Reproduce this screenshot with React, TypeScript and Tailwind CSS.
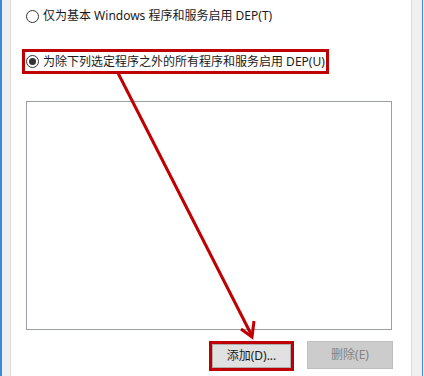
import React from "react";

const RED = "#c00000";

function Radio({ checked }: { checked?: boolean }) {
    return (
        <span className="w-[13px] h-[13px] rounded-full border border-[#333333] bg-white flex items-center justify-center shrink-0">
            {checked && <span className="w-[7px] h-[7px] rounded-full bg-[#333333]" />}
        </span>
    );
}

export default function App() {
    return (
        <div
            className="relative w-[424px] h-[376px] flex overflow-hidden bg-white text-[12px] text-[#1a1a1a]"
            style={{ fontFamily: '"Noto Sans", "Noto Sans CJK SC", sans-serif' }}
        >
            {/* left window frame */}
            <div className="w-[2px] bg-[#3b8ad9]" />
            <div className="w-[8px] bg-[#f0f0f0]" />

            {/* dialog panel */}
            <div className="w-[402px] flex flex-col bg-white border-x border-[#dadada]">
                <label className="mt-[9px] ml-[15px] h-[14px] flex items-center gap-[4px] leading-none">
                    <Radio />
                    <span>仅为基本 Windows 程序和服务启用 DEP(T)</span>
                </label>

                <div
                    className="mt-[26px] ml-[11px] w-[307px] h-[25px] border-[3px] flex items-center gap-[4px] pl-[1px] leading-none"
                    style={{ borderColor: RED }}
                >
                    <Radio checked />
                    <span>为除下列选定程序之外的所有程序和服务启用 DEP(U)</span>
                </div>

                <div className="mt-[27px] ml-[15px] w-[366px] h-[229px] border border-[#9a9ea6] bg-white" />

                <div className="mt-[11px] flex justify-end items-start gap-[13px] pr-[18px]">
                    <div className="w-[85px] h-[30px] border-[3px]" style={{ borderColor: RED }}>
                        <button className="w-full h-full bg-[#e1e1e1] border border-[#adadad] flex items-center justify-center leading-none text-[#1a1a1a]">
                            添加(D)...
                        </button>
                    </div>
                    <button
                        disabled
                        className="w-[86px] h-[28px] bg-[#cccccc] border border-[#bfbfbf] flex items-center justify-center leading-none text-[#838383]"
                    >
                        删除(E)
                    </button>
                </div>
            </div>

            {/* right window frame */}
            <div className="w-[10px] bg-[#f0f0f0]" />
            <div className="w-[1px] bg-[#3b8ad9]" />
            <div className="w-[1px] bg-[#e8eef5]" />

            {/* annotation arrow */}
            <svg className="absolute inset-0 pointer-events-none" width="424" height="376">
                <line x1="118" y1="73" x2="252" y2="336" stroke={RED} strokeWidth="3" />
                <polyline
                    points="241,329 252,337 254,321"
                    fill="none"
                    stroke={RED}
                    strokeWidth="3"
                    strokeLinejoin="miter"
                />
            </svg>
        </div>
    );
}
